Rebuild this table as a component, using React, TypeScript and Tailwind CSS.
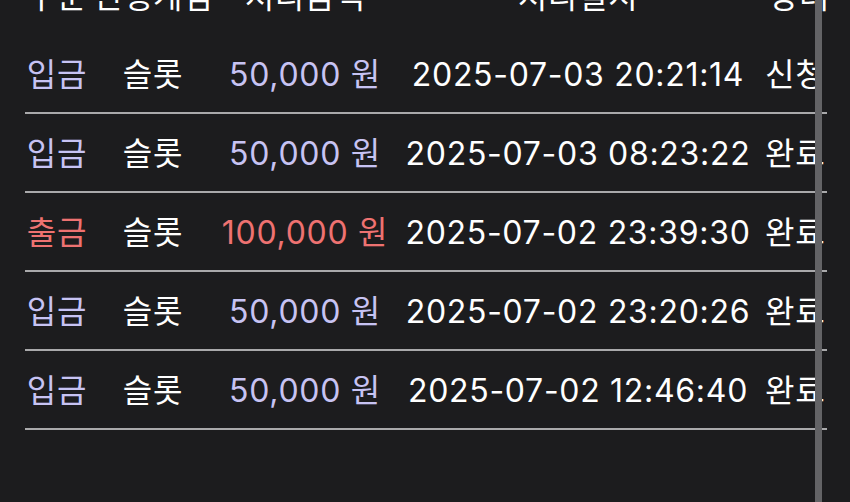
import React from "react";

type Row = { type: "입금" | "출금"; game: string; amount: string; date: string; status: string };

const rows: Row[] = [
  { type: "입금", game: "슬롯", amount: "50,000 원", date: "2025-07-03 20:21:14", status: "신청" },
  { type: "입금", game: "슬롯", amount: "50,000 원", date: "2025-07-03 08:23:22", status: "완료..." },
  { type: "출금", game: "슬롯", amount: "100,000 원", date: "2025-07-02 23:39:30", status: "완료..." },
  { type: "입금", game: "슬롯", amount: "50,000 원", date: "2025-07-02 23:20:26", status: "완료..." },
  { type: "입금", game: "슬롯", amount: "50,000 원", date: "2025-07-02 12:46:40", status: "완료..." },
];

const grid = "grid grid-cols-[64px_128px_176px_370px_1fr] items-center";

export default function App() {
  return (
    <div
      className="relative w-[850px] h-[502px] overflow-hidden bg-[#1c1c1e] text-white"
      style={{ fontFamily: 'Inter, "Noto Sans CJK KR", sans-serif' }}
    >
      <div className="ml-[25px] w-[802px] -mt-[42px] overflow-hidden text-[32px] leading-none tracking-[0.7px]">
        <div className={`${grid} h-[77px]`}>
          <div className="text-center whitespace-nowrap">구분</div>
          <div className="text-center whitespace-nowrap">진행게임</div>
          <div className="text-center whitespace-nowrap">처리금액</div>
          <div className="text-center whitespace-nowrap">처리일시</div>
          <div className="pl-[6px] whitespace-nowrap">상태</div>
        </div>
        {rows.map((r, i) => {
          const isOut = r.type === "출금";
          const accent = isOut ? "text-[#ee7271]" : "text-[#c7c3f3]";
          return (
            <div key={i} className={`${grid} h-[79px] border-b-2 border-[#a9a9ab] pt-[2px]`}>
              <div className={`text-center whitespace-nowrap ${accent}`}>{r.type}</div>
              <div className="text-center whitespace-nowrap">{r.game}</div>
              <div className={`text-center whitespace-nowrap ${accent}`}>{r.amount}</div>
              <div className="text-center whitespace-nowrap">{r.date}</div>
              <div className="pl-[2px] whitespace-nowrap overflow-hidden">{r.status}</div>
            </div>
          );
        })}
      </div>
      <div className="absolute top-0 left-[815px] w-[7px] h-full bg-[#636366]" />
    </div>
  );
}
